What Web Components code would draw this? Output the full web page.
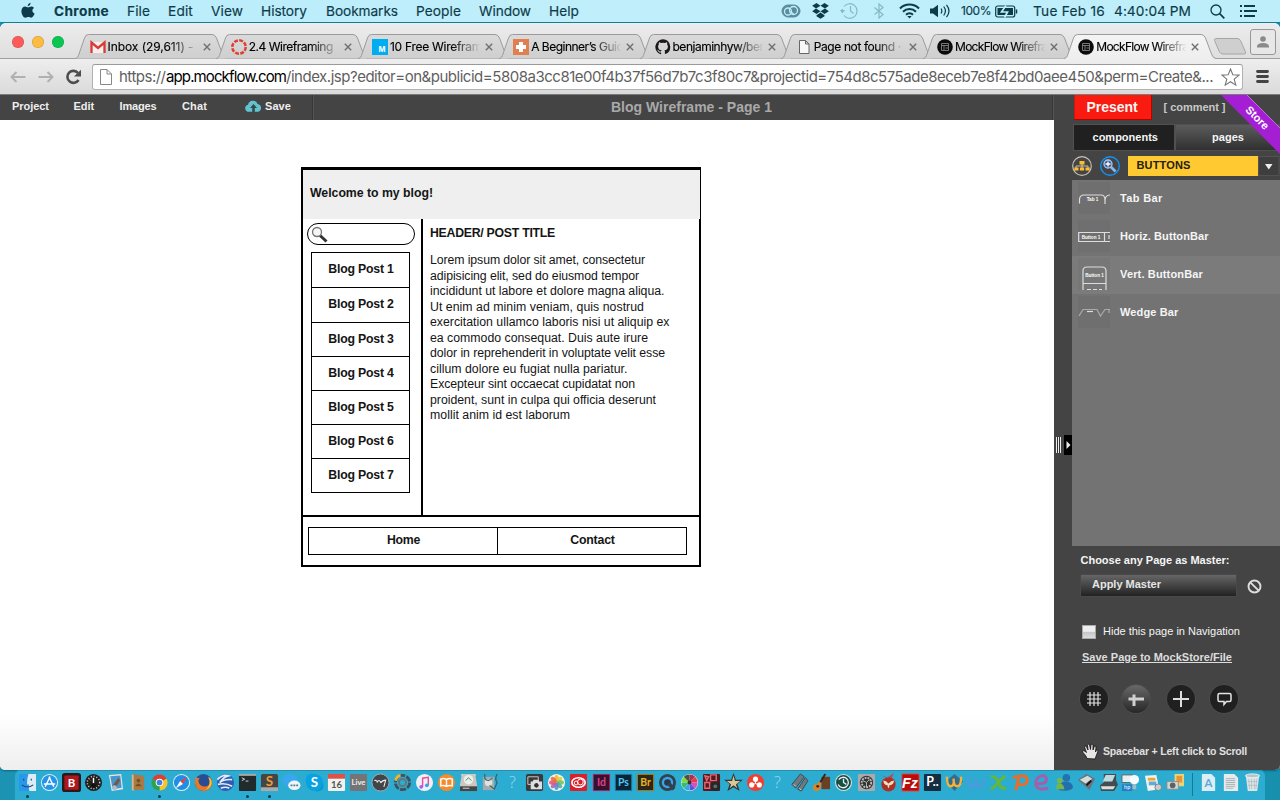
<!DOCTYPE html>
<html lang="en">
<head>
<meta charset="utf-8">
<title>MockFlow Wireframe</title>
<style>
html,body{margin:0;padding:0}
body{width:1280px;height:800px;overflow:hidden;background:#1b93b3;font-family:"Liberation Sans",Arial,sans-serif}
</style>
</head>
<body>
<mock-desktop></mock-desktop>
<script>
const define = (name, html, init) => customElements.define(name, class extends HTMLElement {
  connectedCallback() {
    if (this.shadowRoot) return;
    const root = this.attachShadow({mode: 'open'});
    root.innerHTML = typeof html === 'function' ? html(this) : html;
    if (init) init(this, root);
  }
});

define('mock-desktop', `
<style>
:host{display:flex;flex-direction:column;width:1280px;height:800px;background:linear-gradient(90deg,#1c93b3,#2aa9cd 50%,#1790ae)}
.win{height:747px;display:flex;flex-direction:column;border-radius:6px 6px 5px 5px;overflow:hidden;background:#fff;box-shadow:0 1px 2px #0e6580}
.work{display:flex;height:675px}
.left{width:1054px;display:flex;flex-direction:column;background:linear-gradient(#fff 620px,#eee)}
</style>
<mac-menubar></mac-menubar>
<div class="win">
  <browser-tabs></browser-tabs>
  <browser-toolbar></browser-toolbar>
  <div class="work">
    <div class="left"><app-bar></app-bar><blog-wireframe></blog-wireframe></div>
    <side-panel></side-panel>
  </div>
</div>
<mac-dock></mac-dock>`);

const G = (gap, w, t, extra = '') => `<fit-text w="${w}" style="margin-left:${gap}px;${extra}">${t}</fit-text>`;

define('mac-menubar', `
<style>
:host{display:flex;align-items:center;height:22px;border-bottom:1px solid #14809b;background:linear-gradient(90deg,#b9ecfa,#c0effb 50%,#bdeefa);color:#0d3b49;font:13.700px/22px Inter,Roboto,sans-serif;-webkit-text-stroke:.15px #0d3b49;box-sizing:content-box}
svg{display:block;flex:none}
</style>
<svg width="14" height="17" viewBox="0 0 14 17" style="margin-left:20.5px;margin-top:-2px" fill="#0d3b49"><path d="M9.6.8c.1 1.9-1.3 3.3-2.9 3.4C6.500 2.500 8 1 9.600.8zM12.900 6c-2.300 1.500-1.800 4.500.7 5.500-.7 2-1.900 4.200-3.400 4.200-1.100 0-1.500-.7-2.800-.7s-1.800.7-2.800.7C2.300 15.700.400 12 .400 9.200c0-2.900 1.800-4.600 3.700-4.600 1.200 0 2.200.8 3 .8.700 0 1.900-.9 3.400-.9 1 0 1.900.5 2.400 1.500z"/></svg>
${G(19.5,55,'Chrome','font-weight:700')}${G(18,23,'File')}${G(18,25,'Edit')}${G(18,32,'View')}${G(18,46,'History')}${G(19,72,'Bookmarks')}${G(18,45,'People')}${G(18,52,'Window')}${G(18,30,'Help')}
<svg width="20" height="14" viewBox="0 0 20 14" style="margin-left:201.500px" fill="none" stroke="#5b8c9b"><rect x="1" y="1" width="18" height="12" rx="6" fill="#5b8c9b"/><g stroke="#bdeefa" stroke-width="1.300"><circle cx="7" cy="7.500" r="3.500"/><circle cx="12.500" cy="6.500" r="4"/><path d="M9.500 7.500l3 2.500"/></g></svg>
<svg width="17" height="16" viewBox="0 0 17 16" style="margin-left:11px" fill="#0d3b49"><path d="M4.500 0L8.500 2.800 4 5.500.2 2.800zM12.500 0l4.300 2.800L13 5.500 8.500 2.800zM4 5.500l4.500 2.800L4.500 11 .2 8.200zM13 5.500l3.800 2.700-4.300 2.800-4-2.700zM8.500 9.500l4 2.700v1L8.500 15.700l-4-2.500v-1z"/></svg>
<svg width="19" height="18" viewBox="0 0 19 18" style="margin-left:11px" fill="none" stroke="#83b9c6" stroke-width="1.200"><path d="M4 4.500A7.300 7.300 0 1 1 4 13.500M2.300 9.500V7M10.500 4v5l3 2.500"/><path d="M0 8l2.300 3.500L5 8z" fill="#83b9c6" stroke="none"/></svg>
<svg width="10" height="16" viewBox="0 0 10 16" style="margin-left:15.500px" fill="none" stroke="#83b9c6" stroke-width="1.200"><path d="M.5 4.500l8.500 7L5 15V1l4 3.500-8.500 7"/></svg>
<svg width="21" height="16" viewBox="0 0 21 16" style="margin-left:14.500px" fill="none" stroke="#0d3b49" stroke-width="2"><path d="M1 5.500a13.500 13.500 0 0 1 19 0M4 8.700a9.300 9.300 0 0 1 13 0M7 11.800a5 5 0 0 1 7 0"/><path d="M8.300 13L10.500 15.500 12.700 13z" fill="#0d3b49" stroke="none"/></svg>
<svg width="21" height="14" viewBox="0 0 21 14" style="margin-left:10px" fill="none" stroke="#0d3b49" stroke-width="1.200"><path d="M0 4.500h3L8 .8v12.400L3 9.500H0z" fill="#0d3b49" stroke="none"/><path d="M11 4.500q1.700 2.500 0 5M13.700 2.500q3.500 4.500 0 9M16.500.8q5 6.200 0 12.400"/></svg>
${G(10.5,30,'100%','font-size:12px')}
<svg width="23" height="13" viewBox="0 0 23 13" style="margin-left:4px" fill="none" stroke="#0d3b49"><rect x=".7" y="1" width="19" height="11" rx="2" stroke-width="1.200"/><path d="M2.500 3h15.500v7H2.500z" fill="#0d3b49" stroke="none"/><path d="M21.500 4.500v4" stroke-width="1.500"/><path d="M11 .5L6.500 7h6L9.500 12.500" stroke="#bdeefa" stroke-width="1.700"/></svg>
${G(15,72,'Tue Feb 16')}${G(9,77,'4:40:04 PM')}
<svg width="15" height="15" viewBox="0 0 15 15" style="margin-left:18.500px" fill="none" stroke="#0d3b49" stroke-width="1.300"><circle cx="6" cy="6" r="5"/><path d="M9.700 9.700l4.600 4.600" stroke-width="1.700"/></svg>
<svg width="19" height="12" viewBox="0 0 19 12" style="margin-left:14px" stroke="#0d3b49" stroke-width="2"><path d="M1 1h2M1 6h2M1 11h2M5 1h11M5 6h13M5 11h11"/></svg>`);

const FAV = {
  gmail: `<path d="M1 3h14v11H1z" fill="#f4eeee"/><path d="M1.500 14V3.500L8 9l6.500-5.500V14" fill="none" stroke="#d93a34" stroke-width="2.300"/>`,
  canvas: `<circle cx="8" cy="8" r="6.700" fill="none" stroke="#e03e34" stroke-width="2.500" stroke-dasharray="3.900 1.363"/>`,
  m: `<path d="M0 0h16v16H0z" fill="#00adf0"/><text x="10" y="12.500" font-size="7.500" font-weight="700" fill="#fff" text-anchor="middle" font-family="Inter,sans-serif">M</text>`,
  plus: `<path d="M0 0h16v16H0z" fill="#e27f50"/><path d="M6 3h4v3h3v4h-3v3H6v-3H3V6h3z" fill="#fff"/>`,
  github: `<path fill="#1b1817" d="M8 .3a7.700 7.700 0 0 0-2.400 15c.4.1.5-.2.500-.4v-1.500c-2.200.5-2.700-1-2.700-1-.4-.9-.9-1.100-.9-1.100-.7-.5.1-.5.1-.5.8.1 1.200.8 1.200.8.700 1.200 1.800.9 2.300.7.100-.5.300-.9.500-1.100-1.700-.2-3.500-.9-3.500-3.800 0-.9.3-1.500.8-2-.1-.2-.4-1 .1-2.100 0 0 .6-.2 2.100.8a7 7 0 0 1 3.800 0c1.500-1 2.100-.8 2.100-.8.5 1.100.2 1.900.1 2.100.5.5.8 1.200.8 2 0 2.900-1.800 3.600-3.500 3.800.3.200.5.700.5 1.400v2.100c0 .2.100.5.500.4A7.700 7.700 0 0 0 8 .300z"/>`,
  page: `<path d="M3.500 1.500h6l3.500 3.500v9.500H3.500zM9.500 1.500V5H13" fill="#f7f7f7" stroke="#666"/>`,
  mock: `<circle cx="8" cy="8" r="7.800" fill="#0c0a0c"/><path d="M4.500 4.500h7v7h-7zM4.500 6.500h7M7 6.500v5M8.500 9h3" fill="none" stroke="#777" stroke-width="1"/>`
};

define('browser-tab', el => {
  const on = el.hasAttribute('active');
  return `
<style>
:host{display:block;flex:none;width:152px;height:25px;margin-right:-10.750px;position:relative;z-index:${on ? 2 : 0}}
.bg{display:block;position:absolute;inset:0}
.row{position:relative;display:flex;align-items:center;height:25px;padding:0 13px 0 14.500px;font:12px/25px Inter,Roboto,sans-serif;color:#000;-webkit-text-stroke:.15px #000}
.t{width:90px;margin-left:2px;overflow:hidden;white-space:nowrap;-webkit-mask-image:linear-gradient(90deg,#000 68%,transparent 101%);mask-image:linear-gradient(90deg,#000 68%,transparent 101%)}
svg{flex:none}
</style>
<svg class="bg" width="152" height="26" viewBox="0 0 152 26"><defs><linearGradient id="g" x2="0" y2="1"><stop stop-color="${on ? '#f4f4f4' : '#dadada'}"/><stop offset="1" stop-color="${on ? '#eee' : '#cfcfcf'}"/></linearGradient></defs>
<path d="M0 24.500C3 24 3 22.500 4 20L9.500 4Q10.500.5 13.500.5H137Q140 .5 141.500 4L147.500 20Q149 24.500 152 24.500${on ? 'V26H0' : ''}" fill="url(#g)"/><path d="M0 24.500C3 24 3 22.500 4 20L9.500 4Q10.500.5 13.500.5H137Q140 .5 141.500 4L147.500 20Q149 24.500 152 24.500" fill="none" stroke="#9b9b9b"/></svg>
<div class="row"><svg width="16" height="16" viewBox="0 0 16 16">${FAV[el.getAttribute('icon')]}</svg><div class="t"><slot></slot></div><svg width="8" height="8" viewBox="0 0 8 8" style="margin-left:5px;margin-top:1px" stroke="#707070" stroke-width="1.400"><path d="M.8.8l6.400 6.400M7.200.8L.8 7.200"/></svg></div>`;
});

const tab = (i, w, t, a = '') => `<browser-tab icon="${i}" ${a}><fit-text w="${w}">${t}</fit-text></browser-tab>`;
define('browser-tabs', `
<style>
:host{display:flex;flex:none;height:36px;background:linear-gradient(#ececec,#dedede);box-shadow:inset 0 -1px #a0a0a0;align-items:flex-end;position:relative;box-sizing:border-box}
.lights{display:flex;gap:8px;width:63px;padding-left:12px;align-self:flex-start;padding-top:13px}
.lights i{width:12px;height:12px;border-radius:50%;box-shadow:inset 0 0 0 .5px #0003}
.new{margin:0 0 4px 8px}
.user{display:flex;width:24px;height:24px;border:1px solid #979797;border-radius:3px;margin:0 0 4px 3px;align-items:center;justify-content:center;background:#e7e7e7}
</style>
<div class="lights"><i style="background:#fc5b57"></i><i style="background:#fdbc40"></i><i style="background:#07c750"></i></div>
${tab('gmail',86,'Inbox (29,611) -')}${tab('canvas',84,'2.4 Wireframing')}${tab('m',92,'10 Free Wirefram')}${tab('plus',92,'A Beginner’s Guid')}${tab('github',91,'benjaminhyw/ber')}${tab('page',87,'Page not found ·')}${tab('mock',92,'MockFlow Wirefra')}${tab('mock',92,'MockFlow Wirefra','active')}
<svg class="new" width="34" height="17" viewBox="0 0 34 17"><path d="M3 .5H24Q26.500.5 27.500 2.500L32.500 14Q33 16 31 16H10Q7.500 16 6.500 14L1.500 2.500Q1 .5 3 .5z" fill="#cfcfcf" stroke="#a6a6a6"/></svg>
<div class="user"><svg width="12" height="12" viewBox="0 0 12 12" fill="#8a8a8a"><circle cx="6" cy="3" r="2.800"/><path d="M0 11.500V10Q1 7 6 7t6 3v1.500z"/></svg></div>`);

define('browser-toolbar', `
<style>
:host{display:flex;flex:none;align-items:center;height:36px;box-sizing:border-box;background:linear-gradient(#eee,#dadada);border-bottom:1px solid #7b7b7b;font:15px/24px Inter,Roboto,sans-serif;color:#5f5f5f}
.box{display:flex;align-items:center;box-sizing:border-box;width:1151px;height:26px;background:#fff;border:1px solid #b1b1b1;border-top-color:#9a9a9a;border-radius:3px;margin-left:10px}
svg{flex:none}
</style>
<svg width="16" height="12" viewBox="0 0 16 12" style="margin-left:10px" fill="none" stroke="#b1b1b1" stroke-width="2"><path d="M15.500 6H1.500M6.500 1l-5 5 5 5"/></svg>
<svg width="16" height="12" viewBox="0 0 16 12" style="margin-left:12px" fill="none" stroke="#b1b1b1" stroke-width="2"><path d="M.5 6h14M9.500 1l5 5-5 5"/></svg>
<svg width="17" height="16" viewBox="0 0 17 16" style="margin-left:11px" fill="none" stroke="#4d4d4d" stroke-width="2.600"><path d="M13.500 11A6 6 0 1 1 13 4"/><path d="M16 .8v6.700H9z" fill="#4d4d4d" stroke="none"/></svg>
<div class="box">
<svg width="12" height="16" viewBox="0 0 12 16" style="margin-left:7px" fill="#fff" stroke="#888"><path d="M.5.5h6.500l4.500 4.500v10.500H.5zM7 .5V5h4.500"/></svg>
${G(7,46.5,'https://')}${G(.5,120,'app.mockflow.com','color:#000')}${G(0,927,'/index.jsp?editor=on&amp;publicid=5808a3cc81e00f4b37f56d7b7c3f80c7&amp;projectid=754d8c575ade8eceb7e8f42bd0aee450&amp;perm=Create&amp;...')}
<svg width="19" height="18" viewBox="0 0 19 18" style="margin-left:8px" fill="#fff" stroke="#777" stroke-width="1.100"><path d="M9.500 1l2.300 5.800 6.200.3-4.800 4 1.600 6-5.300-3.400-5.300 3.400 1.600-6-4.800-4 6.200-.3z"/></svg>
</div>
<svg width="13" height="13" viewBox="0 0 13 13" style="margin-left:13px" stroke="#444" stroke-width="2.800" stroke-linecap="round"><path d="M1.500 1.500h10M1.500 6.500h10M1.500 11.500h10"/></svg>`);

define('app-bar', `
<style>
:host{display:flex;flex:none;align-items:center;height:25px;background:#444;font:bold 11px/24px "Liberation Sans",Arial,sans-serif;color:#eee}
.sep{width:1px;height:25px;background:#303838;border-right:1px solid #555}
fit-text{margin-bottom:3px}
</style>
${G(12,37,'Project')}${G(24.500,20.500,'Edit')}${G(25.500,37,'Images')}${G(25.500,25,'Chat')}
<svg width="17" height="13" viewBox="0 0 17 13" style="margin:0 0 2px 38px"><path d="M4 11.800A3.600 3.600 0 0 1 3 4.700 5 5 0 0 1 12.600 4a4 4 0 0 1 .6 7.800z" fill="#62c3cf"/><path d="M8.500 4L5 8h2.200v4.500h2.600V8H12z" fill="#38494c"/></svg>
${G(3,26,'Save')}<div class="sep" style="margin-left:21px"></div>
${G(297,161,'Blog Wireframe - Page 1','font-size:14px;color:#a9a9a9;margin-bottom:2px')}
<div class="sep" style="margin-left:auto"></div>`);

define('blog-button', `
<style>:host{display:flex;align-items:center;justify-content:center;box-sizing:border-box;border:1px solid #000;font-weight:700;padding-left:1px}</style><slot></slot>`);

const lines = [[215,'Lorem ipsum dolor sit amet, consectetur'],[209,'adipisicing elit, sed do eiusmod tempor'],[234.5,'incididunt ut labore et dolore magna aliqua.'],[214,'Ut enim ad minim veniam, quis nostrud'],[239.5,'exercitation ullamco laboris nisi ut aliquip ex'],[218,'ea commodo consequat. Duis aute irure'],[235,'dolor in reprehenderit in voluptate velit esse'],[197.500,'cillum dolore eu fugiat nulla pariatur.'],[205,'Excepteur sint occaecat cupidatat non'],[226,'proident, sunt in culpa qui officia deserunt'],[140,'mollit anim id est laborum']];
define('blog-wireframe', `
<style>
:host{display:flex;flex-direction:column;box-sizing:border-box;width:400px;height:400px;margin:47px 0 0 301px;border:2px solid #000;border-top-width:3px;background:#fff;font:12.300px/15.500px "Liberation Sans",Arial,sans-serif;color:#151515}
header{height:49px;box-sizing:border-box;background:#efefef;margin-right:-1px;padding:16px 0 0 7px;font-weight:700}
.mid{display:flex;height:296px;border-bottom:2px solid #000}
.side{width:118px;border-right:2px solid #000}
.search{display:flex;box-sizing:border-box;width:108px;height:22px;margin:4px 0 7px 4px;border:1px solid #000;border-radius:11px;padding:2px 0 0 3px}
.list{display:flex;flex-direction:column;width:99px;margin-left:8px}
.list blog-button{height:35px;border-bottom:0}
.list blog-button:nth-child(n+3){height:34px;padding-top:1px}
.list blog-button:last-child{height:35px;border-bottom:1px solid #000}
.post{padding:7px 0 0 7px}
.post fit-text{display:block}
.title{font-weight:700;margin-bottom:11.500px}
nav{display:flex;margin:10px 0 0 5px}
nav blog-button{height:28px;width:190px;padding-bottom:1px}
</style>
<header>${G(0,123,'Welcome to my blog!')}</header>
<div class="mid"><div class="side">
<div class="search"><svg width="18" height="18" viewBox="0 0 18 18" fill="none"><path d="M8 8.500l7.500 7" stroke="#333" stroke-width="3"/><circle cx="6" cy="6" r="4.500" fill="#f6f6f6" stroke="#777" stroke-width="1.300"/></svg></div>
<div class="list">${[1,2,3,4,5,6,7].map(n=>`<blog-button><fit-text w="65.500">Blog Post ${n}</fit-text></blog-button>`).join('')}</div></div>
<div class="post"><fit-text class="title" w="125">HEADER/ POST TITLE</fit-text>${lines.map(l=>`<fit-text w="${l[0]}">${l[1]}</fit-text>`).join('')}</div></div>
<nav><blog-button><fit-text w="33">Home</fit-text></blog-button><blog-button style="margin-left:-1px"><fit-text w="44.500">Contact</fit-text></blog-button></nav>`);

define('component-row', el => `
<style>:host{display:flex;align-items:center;height:38px;box-sizing:border-box;padding:0 0 2px 6px;background:${el.hasAttribute('hot') ? '#7b7b7b' : 'transparent'}}
svg{margin-right:10px;flex:none}</style>
<svg width="32" height="32" viewBox="0 0 32 32" fill="none" stroke="#ddd" stroke-width="1.200"><rect width="32" height="32" fill="#000" opacity=".03" stroke="none"/>${el.innerHTML.includes('Tab') ?
`<path d="M1.500 21.500V17Q2 13 6 13H23Q27 13 27 18v4M27 19Q27 13 32 13"/><text x="14.500" y="18.500">Tab 1</text>` : el.innerHTML.includes('Horiz') ?
`<path d="M32 12.500H.7v9H32M26.500 12.500v9M31 15v4"/><text x="13" y="19">Button 1</text>` : el.innerHTML.includes('Vert') ?
`<path d="M5 32V13Q5 9 9 9H24Q28 9 28 13V32M5 25.500H28"/><text x="16.500" y="19">Button 1</text><path d="M9 31.500h4M15 31.500h4M21 31.500h3"/>` :
`<path d="M1 20l4-6.500H19L22.500 20 27 13.500H32M31 14v3" stroke="#aaa"/><path d="M9 15.500h6"/>`}<style>text{font:bold 4.600px "Liberation Sans";fill:#fff;stroke:none;text-anchor:middle}</style></svg><slot></slot>`);

define('round-tool', el => `
<style>:host{display:flex;flex:none;align-items:center;justify-content:center;width:28px;height:28px;border-radius:50%;background:${el.hasAttribute('raised') ? 'linear-gradient(#686868,#272727)' : '#202020'};box-shadow:0 0 0 .7px #4f4f4f}</style><slot></slot>`);

define('side-panel', `
<style>
:host{display:flex;width:226px;height:675px;background:#444;position:relative;font:bold 11px/16px "Liberation Sans",Arial,sans-serif;color:#f5f5f5;overflow:hidden}
.split{width:18px;display:flex;align-items:center;padding-top:25px;box-sizing:border-box;height:675px}
.grip{width:5px;height:16px;margin-left:2px;margin-right:3px;background:repeating-linear-gradient(90deg,#eee 0 1px,#333 1px 2px)}
.arrow{width:8px;height:20px;background:#000;display:flex;align-items:center;justify-content:center}
.col{width:208px;display:flex;flex-direction:column}
.r{display:flex;align-items:center}
.present{height:24px;width:77px;border-right:1px solid #b90000;border-bottom:1px solid #b90000;background:#f91b10;display:flex;align-items:center;font-size:14px;margin-left:2px;box-shadow:inset 1px 0 #c51912}
.tabs{margin:4px 0 0 1px;height:27px}
.tabs div{height:27px;box-sizing:border-box;border:1px solid #505050;display:flex;align-items:center;padding-bottom:2px}
.filter{height:29px}
.yellow{width:130px;height:20px;background:#ffc932;color:#252010;display:flex;align-items:center;margin-left:8px}
.list{height:366px;background:#737373}
.apply{width:157px;height:23px;box-sizing:border-box;background:linear-gradient(#666,#222);border:1px solid #494949;display:flex;align-items:center;color:#e5e5e5;padding-bottom:3px}
.check{width:12px;height:12px;border:1px solid #aaa;background:linear-gradient(#eee 45%,#c5c5c5 50%,#ddd)}
.ribbon{position:absolute;left:167px;top:0}
</style>
<div class="split"><div class="grip"></div><div class="arrow"><svg width="5" height="8" viewBox="0 0 5 8"><path d="M.5 0l4 4-4 4z" fill="#eee"/></svg></div></div>
<div class="col">
 <div class="r"><div class="present">${G(12.500,51,'Present')}</div>${G(11.500,62,'[ comment ]','color:#c8c8c8;margin-bottom:1px')}</div>
 <div class="r tabs"><div style="width:102px;background:#202020">${G(18.500,65.500,'components')}</div><div style="width:105px;background:linear-gradient(#5c5c5c,#303030)">${G(36,32,'pages')}</div></div>
 <div class="r filter">
 <svg width="20" height="20" viewBox="0 0 20 20" fill="none" stroke="#c9c0b4"><circle cx="10" cy="10" r="9.300" stroke-width="1.200"/><path d="M4 12.500V10h12v2.500M10 6v6.500"/><path d="M7.500 5h5v3.500h-5zM2.300 11.500h4.200v3H2.300zM7.900 11.500h4.200v3H7.900zM13.500 11.500h4.200v3h-4.200z" fill="#fdbd2b" stroke="none"/></svg>
 <svg width="20" height="20" viewBox="0 0 20 20" fill="none" style="margin-left:8px"><circle cx="10" cy="10" r="9.300" stroke="#1490ee" stroke-width="1.400"/><path d="M10.500 10.500l5 5" stroke="#8eb6ea" stroke-width="2.600"/><circle cx="8" cy="8" r="4" fill="#3b5f93" stroke="#a9c6f0" stroke-width="1.300"/><path d="M8 5.500v5M5.500 8h5" stroke="#fff" stroke-width="1.300"/></svg>
 <div class="yellow">${G(8.500,54,'BUTTONS','margin-bottom:1px')}</div>
 <svg width="22" height="20" viewBox="0 0 22 20"><path d="M.5.5h20.500v19H.5z" fill="#3e3e3e" stroke="#525252"/><path d="M7 8h7.500l-3.700 5.500z" fill="#eee"/></svg></div>
 <div class="list"><component-row><fit-text w="42.500">Tab Bar</fit-text></component-row><component-row><fit-text w="88.500">Horiz. ButtonBar</fit-text></component-row><component-row hot><fit-text w="83">Vert. ButtonBar</fit-text></component-row><component-row><fit-text w="58.500">Wedge Bar</fit-text></component-row></div>
 <div class="r" style="height:28px;padding:0 0 0 8.500px">${G(0,149,'Choose any Page as Master:')}</div>
 <div class="r" style="padding-left:8px"><div class="apply">${G(11,69,'Apply Master')}</div><svg width="15" height="15" viewBox="0 0 15 15" style="margin-left:10px;margin-top:1px" fill="none" stroke="#ddd" stroke-width="1.900"><circle cx="7.500" cy="7.500" r="6"/><path d="M3.300 3.300l8.400 8.400"/></svg></div>
 <div class="r" style="margin:26px 0 0 10px;font-weight:400"><div class="check" style="margin-top:2px"></div>${G(7,137,'Hide this page in Navigation')}</div>
 <div class="r" style="margin:10px 0 0 10px;color:#ddd">${G(0,150,'Save Page to MockStore/File','text-decoration:underline')}</div>
 <div class="r" style="margin:20px 0 0 7.500px">
 <round-tool><svg width="16" height="16" viewBox="0 0 16 16" stroke="#e2e2e2" stroke-width="1.200"><path d="M4 1v14M8 1v14M12 1v14M1 4h14M1 8h14M1 12h14"/></svg></round-tool>
 <round-tool raised style="margin-left:14.500px"><svg width="18" height="16" viewBox="0 0 18 16" fill="#d0d0d0"><path d="M5.500 3.500h3V15h-3zM1.500 6.500h15.500v3H1.500z"/></svg></round-tool>
 <round-tool style="margin-left:17px"><svg width="18" height="18" viewBox="0 0 18 18" stroke="#ddd" stroke-width="2"><path d="M9 1v16M1 9h16"/></svg></round-tool>
 <round-tool style="margin-left:15px"><svg width="15" height="15" viewBox="0 0 15 15" fill="none" stroke="#e5e5e5" stroke-width="1.500"><path d="M2.500 1.500h10q1.500 0 1.500 1.500v5q0 1.500-1.500 1.500H9.500L7 12.500V9.500H2.500Q1 9.500 1 8V3q0-1.500 1.500-1.500z"/></svg></round-tool></div>
 <div class="r" style="margin:29px 0 0 10px;height:18px;color:#e0e0e0;font-size:10.500px"><svg width="17" height="17" viewBox="0 0 17 17"><path d="M5 15.500Q4.500 13 1 9.500 0 8 1.500 7.700 3 8 4.500 9.500L2.500 4Q2.500 2.500 4 3L6 7 5.500 2Q6 .5 7.500 1.500L8.500 6.500 9 1.500Q10.500.3 11 2v5l1.500-4Q14 2.500 14 4L13.500 9l1-2Q16 6.500 16 8L14.500 12 13 16z" fill="#e6e6e6" stroke="#111" stroke-width=".8"/></svg>${G(4,144,'Spacebar + Left click to Scroll','margin-bottom:1px')}</div>
</div>
<svg class="ribbon" width="59" height="60" viewBox="0 0 59 60"><path d="M0 0H26L59 33V59z" fill="#a41fd4"/><path d="M26 0L59 33" stroke="#c46be3" fill="none"/><text x="36.500" y="26.500" transform="rotate(45 36.500 22.500)" text-anchor="middle" textLength="28" fill="#fff" font-family="Liberation Sans,Arial,sans-serif" font-weight="700" font-size="11">Store</text></svg>`);

const sq = (f, s = '', r = 1) => `<rect x="1" y="1" width="18" height="18" rx="${r}" fill="${f}"/>${s}`;
const ci = (f, s = '') => `<circle cx="10" cy="10" r="9" fill="${f}"/>${s}`;
const tx = (t, f, z, y = 14, fam = 'Lato') => `<text x="10" y="${y}" font-size="${z}" font-weight="700" fill="${f}" text-anchor="middle" font-family="${fam}, sans-serif">${t}</text>`;
const petals = ['#f7b52c','#d3d345','#7fc05a','#4fb6a0','#5a8fd0','#a06ec0','#e0568a','#ee6b3d'].map((c,i)=>`<ellipse cx="10" cy="6" rx="2.300" ry="3.800" fill="${c}" opacity=".9" transform="rotate(${i*45} 10 10)"/>`).join('');
const wedge = cs => cs.map((c,i)=>{const n=cs.length,a=i/n*2*Math.PI,b=(i+1)/n*2*Math.PI;return `<path d="M10 10L${10+8.5*Math.sin(a)} ${10-8.5*Math.cos(a)}A8.500 8.500 0 0 1 ${10+8.5*Math.sin(b)} ${10-8.5*Math.cos(b)}z" fill="${c}"/>`}).join('');
const q = `<text x="10" y="15.500" font-size="17" fill="#8ed6ec" text-anchor="middle" font-family="Noto Sans, sans-serif" font-weight="300">?</text>`;
const ICONS = [
 sq('#2997ea','<path d="M11 1h8v18h-7q-1-4-.5-7H9.500Q9.500 5 11 1z" fill="#dcebf5"/><path d="M6 6v2M14 6v2M4 12.500q6 4.500 12 0" stroke="#174b72" fill="none" stroke-width="1.200"/>'),
 ci('#e4f3fb','<circle cx="10" cy="10" r="8" fill="#2494e8"/><path d="M10.500 4L5.500 14.500M9.500 4l5 10.500M4 11.500h12" stroke="#fff" stroke-width="1.500"/>'),
 `<rect width="20" height="20" rx="3" fill="#29191b"/><rect x="2.500" y="2.500" width="15" height="15" rx="1" fill="#ad171d"/>`+tx('B','#fff',12,14.5),
 ci('#20201f','<circle cx="10" cy="10" r="6.500" fill="none" stroke="#ddd" stroke-width="1.500" stroke-dasharray="1 2"/><path d="M10 5v8" stroke="#fff" stroke-width="1.500"/><circle cx="10" cy="13" r="2.500" fill="#111"/><path d="M5 6l2 2" stroke="#e33"/>'),
 `<path d="M3 2l13-1 2 16-12 2z" fill="#e8e5de"/><path d="M4.500 3.500L15 2.500l1.500 13L7 17z" fill="#4a94cf"/><path d="M7 13L13 5l2 3-4 6z" fill="#715b48"/><circle cx="9" cy="15.500" r="2.500" fill="#a9bdcb"/>`,
 `<path d="M4 1l13 2v15L4 18z" fill="#a97a45"/><path d="M4 1l2 1v17l-2-1z" fill="#d1b78c"/><circle cx="11" cy="8" r="2" fill="#795023"/><path d="M7.500 14q3.500-6 7 0z" fill="#795023"/>`,
 wedge(['#f9c32b','#2ea14f','#dd3f32']).replace(/<path/g,'<path transform="rotate(60 10 10)"')+'<circle cx="10" cy="10" r="4" fill="#fff"/><circle cx="10" cy="10" r="3" fill="#3e80e5"/>',
 ci('#e6eef2','<circle cx="10" cy="10" r="8" fill="#1f8fe5"/><path d="M16 4l-4.500 7.500-3-3z" fill="#e8443a"/><path d="M4 16l4.500-7.500 3 3z" fill="#fff"/>'),
 ci('#294d91','<path d="M2 4q1 2 4 1Q3 9 7 13q5 3 9-1 2-4-1-8 5 3 4 8-2 7-9 7T1 11Q.5 7 2 4z" fill="#e8772a"/><path d="M15 4q5 3 3 9-2 4-6 5 7-5 3-14z" fill="#fac134"/>'),
 ci('#2d5eb2','<path d="M1.500 7Q7 1 13 3Q8 4 4 10 9 6 17 7M2 12q8-2 15 2M5 16q5-2 9 0" stroke="#e4ecf7" stroke-width="1.700" fill="none"/>'),
 sq('#222b2c','<rect x="1" y="1" width="18" height="2" fill="#aaa"/><path d="M4 5l3 1.500-3 1.500M8 8.500h3" stroke="#fff" fill="none" stroke-width=".8"/>'),
 sq('#454545','<path d="M1 15h18v4H1z" fill="#aaa"/>',2)+tx('S','#f39a35',14,13.5),
 `<ellipse cx="8.500" cy="7.500" rx="8" ry="6.500" fill="#38a7ef"/><ellipse cx="13" cy="13" rx="6.500" ry="5" fill="#eef6fc"/><path d="M9 13h2m1 0h2m1 0h2" stroke="#52788f" stroke-width="1.700"/>`,
 `<circle cx="7" cy="7" r="6.500" fill="#09a5e4"/><circle cx="13" cy="13" r="6.500" fill="#0395d8"/>`+ci('#08a1e2')+tx('S','#fff',14,15),
 sq('#f2f2ed','<path d="M1 1h18v5H1z" fill="#dc5148"/>')+tx('16','#555',10,15.5),
 sq('#747474')+tx('Live','#eee',8,12.5),
 ci('#414448','<circle cx="10" cy="10" r="9" fill="none" stroke="#aaa"/><path d="M3.500 8q3-1 3 2 1-3 3-1.500.8.5.5 2 2-3 5.500-3l-2 7" stroke="#eee" fill="none" stroke-width="1.100"/>'),
 `<circle cx="10" cy="10" r="7.500" fill="none" stroke="#41515c" stroke-width="3" stroke-dasharray="6.500 1.350"/><circle cx="10" cy="10" r="3.700" fill="none" stroke="#64747d" stroke-width="2"/><path d="M2.500 8Q4 3 8 2.500" stroke="#efb62b" stroke-width="3" fill="none"/>`,
 ci('#f0f0f6','<path d="M8 14.500V5.500l6-1V13" stroke="#e5509b" fill="none" stroke-width="1.500"/><circle cx="6.500" cy="14.500" r="2" fill="#b05be7"/><circle cx="12.500" cy="13" r="2" fill="#3ba6e9"/>'),
 ci('#f58b2a','<path d="M10 7Q7 5 4 6.500v7q3-1 6 .7 3-1.700 6-.7v-7Q13 5 10 7v7" fill="none" stroke="#fff" stroke-width="1.500"/>'),
 `<path d="M3 1h14l2 12v6H1v-6z" fill="#cbc8c4"/><path d="M1 14h18v5H1z" fill="#464646"/><circle cx="10" cy="7" r="5" fill="#eaf0ea"/><path d="M7 8l3-3 3 3" stroke="#528258" fill="none"/><path d="M2 2h2m12 0h2M4 16h7" stroke="#ddd"/>`,
 `<path d="M2 4h12v14H2z" fill="#a5abad"/><circle cx="8" cy="10" r="4" fill="#dfe2e2"/><path d="M4 1v5q4 4 8-1M17 1q-3 5 0 9l-3 7-5-4" stroke="#385e6b" fill="none" stroke-width="1.200"/>`,
 q,
 sq('#393939','<path d="M3 4h11v8H3z" fill="none" stroke="#ccc"/><path d="M6 9h2l1-2h5l1 2h3v8H6z" fill="#ddd"/><circle cx="12" cy="13" r="3" fill="#333" stroke="#fff"/>',2),
 ci('#f4f3ef',petals),
 sq('#d9212b','<ellipse cx="10" cy="10" rx="7" ry="5" fill="none" stroke="#fff" stroke-width="1.700"/><circle cx="7.500" cy="10.500" r="2" fill="none" stroke="#fff"/><circle cx="12" cy="9.500" r="3" fill="none" stroke="#fff"/>'),
 sq('#35132a','<rect x="1.500" y="1.500" width="17" height="17" fill="none" stroke="#a9266c"/>')+tx('Id','#e43d91',11),
 sq('#0a2537','<rect x="1.500" y="1.500" width="17" height="17" fill="none" stroke="#1d7ba3"/>')+tx('Ps','#55c4f0',11),
 sq('#302614','<rect x="1.500" y="1.500" width="17" height="17" fill="none" stroke="#aa8128"/>')+tx('Br','#e8b12e',11),
 ci('#35404d','<circle cx="10" cy="10" r="6" fill="#39a5e9"/><circle cx="10" cy="10" r="3.500" fill="#293747"/><path d="M11 11l6 6" stroke="#35404d" stroke-width="4"/>'),
 ci('#eee',wedge(['#a92f55','#e63b4d','#df4cb6','#5e55dc','#37a3e8','#39bb68','#7fda3f','#4c5142'])+'<circle cx="10" cy="10" r="2" fill="#333"/>'),
 sq('#511b22','<path d="M3 3l4 1-2 4zM9 2h6v6H9zM3 10h5v6H3z" fill="none" stroke="#ec6570" stroke-width="1.500"/><circle cx="14" cy="14" r="5" fill="#282728"/><circle cx="14" cy="14" r="2" fill="#596e78"/>'),
 `<path d="M10 0l2.500 7H20l-6 4.500 2.500 7.500L10 15l-6.500 4L6 11.500 0 7h7.500z" fill="#38352f"/><path d="M10 3l1.500 5.500H17L12.500 12l1.500 4-4-3-4 3 1.500-4L3 8.500h5.500z" fill="#d8c99b"/>`,
 ci('#ee3f32','<circle cx="10" cy="6.500" r="2.700" fill="#fff"/><circle cx="6" cy="12.500" r="2.700" fill="#fff"/><circle cx="14" cy="12.500" r="2.700" fill="#fff"/><path d="M10 6v5l-4 2m4-2l4 2" stroke="#fff" fill="none"/>'),
 q,
 `<path d="M2 12L11 1l4 3L6 16zM8 17l8-12 3 3-7 11z" fill="#6f7980" stroke="#3a4a52"/><path d="M4 12l2 2M10 16l2 2" stroke="#ddd"/>`,
 `<path d="M10 4h9v13h-9z" fill="#6c3f24"/><path d="M14 1L8 11" stroke="#3a2618" stroke-width="2"/><path d="M7 9q4 1 2 4 1 5-3 6-6 0-5-5 1-3 4-2z" fill="#da8628"/><circle cx="6" cy="14" r="1.500" fill="#472510"/>`,
 ci('#d3ddda','<circle cx="10" cy="10" r="7.800" fill="#164f46"/><path d="M5 7a5.500 5.500 0 1 1-.5 5M10 6v4l3 2" stroke="#eee" fill="none" stroke-width="1.400"/>'),
 sq('#aaa','<circle cx="10" cy="10" r="7" fill="#333"/><circle cx="10" cy="10" r="5" fill="none" stroke="#bbb" stroke-width="2" stroke-dasharray="2 1"/><path d="M10 10L6 8m4 2l3-3m-3 3v5" stroke="#bbb"/>'),
 `<path d="M1 2l7 3 8-5-3 6 5 1z" fill="#b64c59"/><circle cx="10" cy="12" r="7.500" fill="#ae2f23"/><path d="M4.500 8q3 0 5.500 3 3-3 6-3-1 5-5 5 0 3-1 3t-1-3q-4 0-4.500-5z" fill="#e9e2c2"/>`,
 sq('#b90c0c','<path d="M1 1h18v18H1z" fill="none" stroke="#e24747"/>')+`<text x="9.500" y="16" font-family="Liberation Sans, sans-serif" font-weight="700" font-style="italic" font-size="15" fill="#fff" text-anchor="middle">Fz</text>`,
 sq('#162c40')+tx('P..','#fff',13,14),
 `<path d="M10 1l9 8-9 10L1 9z" fill="#336c8c"/><path d="M2 4Q2 14 6 14T9 6Q9 14 13 14T17 4" fill="none" stroke="#f3b339" stroke-width="2.500"/>`,
 `<path d="M1 4Q2 16 6 15T9 6Q10 16 13 15T18 6" fill="none" stroke="#4d9ade" stroke-width="2.800"/>`,
 `<path d="M2 4Q8 3 10 10t8 6M17 3Q12 7 9 11T2 17" stroke="#65b82f" stroke-width="3" fill="none"/>`,
 `<path d="M2 5Q16 0 17 7T6 12M8 5L5 18" stroke="#e96d2a" stroke-width="3.200" fill="none"/>`,
 `<path d="M4 11Q14 12 14 7T9 3Q2 5 3 12t13 4" stroke="#a35fac" stroke-width="3.200" fill="none"/>`,
 `<circle cx="12" cy="5" r="4" fill="#2273af"/><path d="M4 18q0-9 7-9t8 6q-2 5-15 3z" fill="#246fa9"/><circle cx="5" cy="8" r="3" fill="#76b64c"/><path d="M1 17q0-6 4-6t5 6z" fill="#76b64c"/>`,
 `<path d="M1 7l9-6 9 5-6 12z" fill="#69747a"/><path d="M3 7l8-4 5 3-7 5z" fill="#d6dbdc"/><path d="M10 13l5-5" stroke="#111" stroke-width="2"/>`,
 `<path d="M5 1h13v7l2 4-4 7H2l-1-6 4-3z" fill="#434c50"/><path d="M7 2h10L14 9H4z" fill="#bddae1"/><path d="M2 14h15l-2 3H3z" fill="#ddd"/>`,
 `<path d="M1 2h11v8H1z" fill="#e9eff1" stroke="#54646b"/><path d="M1 12h11v7H1z" fill="#267cc5"/><circle cx="14" cy="7" r="5" fill="#f5fcff"/><path d="M12 12h4v5h-4z" fill="#9fbbc5"/>`+`<text x="6.500" y="17" font-size="6" fill="#fff" text-anchor="middle" font-family="Lato, sans-serif">hp</text>`,
 `<path d="M1 3l12-1 3 15-12 2z" fill="#f2f3ed"/><path d="M4 5h8v3H4z" fill="#e8a838"/><path d="M5 9h8v4H5z" fill="#67a7d9"/><circle cx="15" cy="15" r="3.500" fill="#ccc" stroke="#6b8790"/>`,
 `<path d="M9 1h10v13H9z" fill="#ead47b"/><path d="M11 3h6v7h-6z" fill="#ec9335"/><path d="M1 9h12v8H1z" fill="#d7d7d2" stroke="#8c8e8c"/><circle cx="7" cy="13" r="3" fill="#5d6266"/>`,
];
const TRAY = [
 `<path d="M3 1h10l4 4v14H3z" fill="#dceef5"/>`+tx('A','#5da8d6',12,15),
 `<path d="M3 1h11l4 4v14H3z" fill="#e8ebeb"/><path d="M5 6h10M5 8h10M5 10h10M5 12h10M5 14h10M5 16h8" stroke="#89979d" stroke-width=".7"/>`,
 `<path d="M3 3h14l-2 16H5z" fill="#dde5e7"/><ellipse cx="10" cy="3" rx="7.500" ry="2" fill="#b7c4c8" stroke="#eef4f5"/><path d="M6 6l1 11M9 6v11M12 6v11M14.500 6l-1 11M5 9h10M5 13h10" stroke="#9fb2b9" stroke-width=".6"/>`
];
define('dock-icon', el => {
  const k = +el.getAttribute('n');
  return `<style>:host{display:flex;flex:none;flex-direction:column;align-items:center;width:22.080px;height:27px}svg{width:19px;height:19px;display:block;overflow:visible}i{width:3px;height:3px;border-radius:50%;margin-top:2.500px;background:${el.hasAttribute('running') ? '#073b50' : 'transparent'}}</style><svg viewBox="0 0 20 20">${(el.hasAttribute('tray') ? TRAY : ICONS)[k]}</svg><i></i>`;
});
define('mac-dock', `
<style>:host{display:flex;box-sizing:border-box;width:1250px;height:30px;margin-left:15px;padding:3px 0 0 1px;border-radius:5px 5px 0 0;background:#2dacd1;box-shadow:inset 0 1px #258fae}
i{width:1px;height:23px;background:#1b7595;margin:0 4px 0 6px}</style>
${ICONS.map((_,k)=>`<dock-icon n="${k}" ${[0,6,10,11].includes(k)?'running':''}></dock-icon>`).join('')}<i></i>${TRAY.map((_,k)=>`<dock-icon tray n="${k}"></dock-icon>`).join('')}`);

/* Label that spreads its letters so that the line is exactly `w` pixels long. */
define('fit-text', `<style>:host{display:inline-block;flex:none;white-space:nowrap}span{display:inline-block;text-decoration:inherit}</style><span><slot></slot></span>`, (el, root) => {
  const w = parseFloat(el.getAttribute('w')), s = root.querySelector('span');
  const n = el.textContent.length;
  s.style.letterSpacing = (w - s.getBoundingClientRect().width) / n + 'px';
  el.style.width = w + 'px';
});
</script>
</body>
</html>
